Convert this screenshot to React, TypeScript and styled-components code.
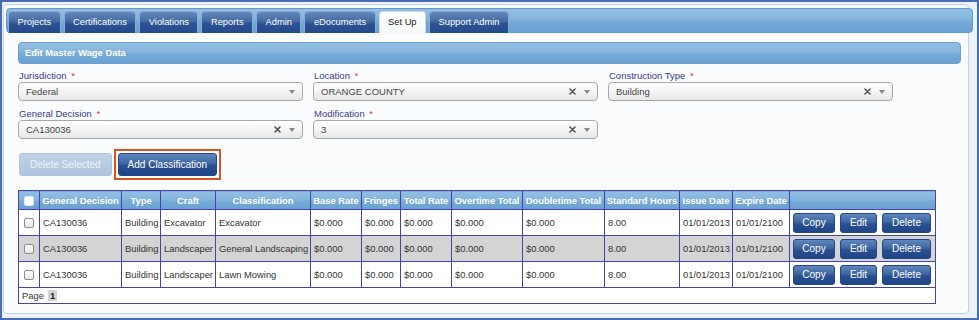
import React from 'react';
import styled, { createGlobalStyle, css } from 'styled-components';

const GlobalStyle = createGlobalStyle`
  html, body { margin: 0; padding: 0; background: #ffffff; }
  body { font-family: "Liberation Sans", Arial, sans-serif; }
  * { box-sizing: border-box; }
`;

const glossBlue = css`
  background: linear-gradient(to bottom, #92bfe3 0%, #86b5dd 42%, #74a9d7 58%, #6aa1d2 100%);
`;

const darkButton = css`
  background: linear-gradient(to bottom, #5f86bf 0%, #3f679f 45%, #2a5092 55%, #1f4587 100%);
  border: 1px solid #22478a;
  color: #ffffff;
`;

const Frame = styled.div`
  width: 979px;
  height: 320px;
  border: 2px solid #4a6cb4;
  background: #edf2f8;
  padding: 2px 8px 4px 1px;
`;

const Panel = styled.div`
  height: 100%;
  border: 1px solid #c0d2e6;
  border-radius: 4px;
  background: #fbfcfe;
  display: flex;
  flex-direction: column;
`;

const TabBar = styled.div`
  height: 26px;
  margin: 3px -5px 0 2px;
  padding: 2px 0 0 1px;
  border: 1px solid #6398cc;
  border-radius: 4px;
  ${glossBlue};
  display: flex;
  align-items: flex-end;
  gap: 3px;
`;

const Tab = styled.div<{ $active?: boolean }>`
  height: 22px;
  margin-bottom: -1px;
  padding: 0 8.5px;
  border: 1px solid #8aabd6;
  border-bottom: none;
  border-radius: 4px 4px 0 0;
  font-size: 9.3px;
  line-height: 21px;
  white-space: nowrap;
  color: #ffffff;
  background: linear-gradient(to bottom, #6389bf 0%, #44699f 45%, #2d5393 55%, #234a8b 100%);
  ${(p) =>
    p.$active &&
    css`
      color: #222222;
      background: linear-gradient(to bottom, #ffffff 0%, #f6f7f9 100%);
      border-color: #c9d8ea;
    `}
`;

const Body = styled.div`
  padding: 0 7px 9px 14px;
  display: flex;
  flex-direction: column;
`;

const SectionHeader = styled.div`
  margin-top: 9px;
  height: 22px;
  border: 1px solid #6a9fd2;
  border-radius: 4px;
  ${glossBlue};
  color: #ffffff;
  font-weight: bold;
  font-size: 9.4px;
  line-height: 20px;
  padding-left: 6px;
`;

const FormGrid = styled.div`
  margin-top: 5px;
  display: grid;
  grid-template-columns: repeat(3, 285px);
  column-gap: 10px;
  row-gap: 6px;
`;

const Field = styled.div`
  display: flex;
  flex-direction: column;
`;

const Label = styled.label`
  font-size: 9.5px;
  line-height: 13px;
  color: #38388f;
  padding-left: 1px;
`;

const Req = styled.span`
  color: #e03a3a;
  margin-left: 2px;
`;

const SelectBox = styled.div`
  height: 19px;
  border: 1px solid #a8a8a8;
  border-radius: 4px;
  background: linear-gradient(to bottom, #ffffff 0%, #f4f4f4 50%, #e8e8e8 100%);
  display: flex;
  align-items: center;
  padding: 0 7px;
  font-size: 9.5px;
  color: #444444;
`;

const SelectValue = styled.span`
  flex: 1;
`;

const SelectIcons = styled.span`
  display: flex;
  align-items: center;
  gap: 8px;
`;

const ButtonRow = styled.div`
  margin-top: 10px;
  display: flex;
  align-items: center;
`;

const DisabledButton = styled.button`
  margin-left: 1px;
  height: 23px;
  padding: 0 10px;
  border: 1px solid #b0c4dd;
  border-radius: 3px;
  background: linear-gradient(to bottom, #c0d2e7, #afc4de);
  color: #eef4fa;
  font-family: inherit;
  font-size: 10px;
`;

const Highlight = styled.span`
  margin-left: 2px;
  border: 2px solid #d6561e;
  padding: 2px;
  display: inline-flex;
`;

const PrimaryButton = styled.button`
  height: 23px;
  padding: 0 9px;
  border-radius: 3px;
  ${darkButton};
  font-family: inherit;
  font-size: 10px;
`;

const Table = styled.table`
  margin-top: 10px;
  width: 917px;
  table-layout: fixed;
  border-collapse: collapse;
  border: 1px solid #4444a4;
  font-size: 9.4px;
  color: #333333;
  background: #ffffff;
`;

const Col = styled.col<{ $w: number }>`
  width: ${(p) => p.$w}px;
`;

const Th = styled.th`
  height: 19px;
  padding: 0 1px;
  border: 1px solid #4444a4;
  ${glossBlue};
  color: #ffffff;
  font-weight: bold;
  text-align: center;
  white-space: nowrap;
  overflow: hidden;
`;

const Tr = styled.tr<{ $alt?: boolean }>`
  background: ${(p) => (p.$alt ? '#d4d4d4' : '#ffffff')};
`;

const Td = styled.td`
  height: 26px;
  padding: 0 0 0 3px;
  border: 1px solid #4444a4;
  text-align: left;
  white-space: nowrap;
  overflow: hidden;
`;

const CheckCell = styled.td`
  border: 1px solid #4444a4;
  padding: 0;
  text-align: center;
`;

const HeadCheckCell = styled.th`
  border: 1px solid #4444a4;
  padding: 0;
  ${glossBlue};
  text-align: center;
`;

const Check = styled.span<{ $head?: boolean }>`
  display: inline-block;
  vertical-align: middle;
  width: 10px;
  height: 10px;
  border-radius: 2px;
  border: 1px solid ${(p) => (p.$head ? '#dfe8f3' : '#8c8c8c')};
  background: ${(p) => (p.$head ? '#ffffff' : 'linear-gradient(to bottom, #ffffff, #e6e6e6)')};
`;

const ActionCell = styled.td`
  border: 1px solid #4444a4;
  padding: 0 0 0 3px;
`;

const Actions = styled.div`
  display: flex;
  gap: 5px;
`;

const ActionButton = styled.button<{ $w: number }>`
  width: ${(p) => p.$w}px;
  height: 20px;
  padding: 0;
  border-radius: 3px;
  ${darkButton};
  font-family: inherit;
  font-size: 10px;
`;

const FootCell = styled.td`
  height: 16px;
  padding: 0 0 0 3px;
  border: 1px solid #4444a4;
  background: #ffffff;
`;

const PageNum = styled.span`
  display: inline-block;
  margin-left: 4px;
  padding: 0 2px;
  background: #d4d4d4;
  color: #222222;
  font-weight: bold;
  line-height: 11px;
`;

const ClearIcon = () => (
  <svg width="7" height="7" viewBox="0 0 7 7">
    <path d="M1 1 L6 6 M6 1 L1 6" stroke="#555" strokeWidth="1.6" strokeLinecap="round" />
  </svg>
);

const CaretIcon = () => (
  <svg width="6" height="4" viewBox="0 0 6 4">
    <path d="M0 0 H6 L3 4 Z" fill="#888" />
  </svg>
);

type SelectProps = { label: string; value: string; clearable?: boolean };

const SelectField = ({ label, value, clearable = true }: SelectProps) => (
  <Field>
    <Label>
      {label} <Req>*</Req>
    </Label>
    <SelectBox>
      <SelectValue>{value}</SelectValue>
      <SelectIcons>
        {clearable && <ClearIcon />}
        <CaretIcon />
      </SelectIcons>
    </SelectBox>
  </Field>
);

const tabs = ['Projects', 'Certifications', 'Violations', 'Reports', 'Admin', 'eDocuments', 'Set Up', 'Support Admin'];

const columns: { label: string; w: number }[] = [
  { label: '', w: 21 },
  { label: 'General Decision', w: 82 },
  { label: 'Type', w: 39 },
  { label: 'Craft', w: 55 },
  { label: 'Classification', w: 95 },
  { label: 'Base Rate', w: 51 },
  { label: 'Fringes', w: 39 },
  { label: 'Total Rate', w: 51 },
  { label: 'Overtime Total', w: 71 },
  { label: 'Doubletime Total', w: 82 },
  { label: 'Standard Hours', w: 75 },
  { label: 'Issue Date', w: 53 },
  { label: 'Expire Date', w: 57 },
  { label: '', w: 146 },
];

const rows = [
  { craft: 'Excavator', cls: 'Excavator' },
  { craft: 'Landscaper', cls: 'General Landscaping' },
  { craft: 'Landscaper', cls: 'Lawn Mowing' },
];

export default function App() {
  return (
    <>
      <GlobalStyle />
      <Frame>
        <Panel>
          <TabBar>
            {tabs.map((t) => (
              <Tab key={t} $active={t === 'Set Up'}>
                {t}
              </Tab>
            ))}
          </TabBar>
          <Body>
            <SectionHeader>Edit Master Wage Data</SectionHeader>
            <FormGrid>
              <SelectField label="Jurisdiction" value="Federal" clearable={false} />
              <SelectField label="Location" value="ORANGE COUNTY" />
              <SelectField label="Construction Type" value="Building" />
              <SelectField label="General Decision" value="CA130036" />
              <SelectField label="Modification" value="3" />
            </FormGrid>
            <ButtonRow>
              <DisabledButton>Delete Selected</DisabledButton>
              <Highlight>
                <PrimaryButton>Add Classification</PrimaryButton>
              </Highlight>
            </ButtonRow>
            <Table>
              <colgroup>
                {columns.map((c, i) => (
                  <Col key={i} $w={c.w} />
                ))}
              </colgroup>
              <thead>
                <tr>
                  <HeadCheckCell>
                    <Check $head />
                  </HeadCheckCell>
                  {columns.slice(1).map((c, i) => (
                    <Th key={i}>{c.label}</Th>
                  ))}
                </tr>
              </thead>
              <tbody>
                {rows.map((r, i) => (
                  <Tr key={i} $alt={i === 1}>
                    <CheckCell>
                      <Check />
                    </CheckCell>
                    <Td>CA130036</Td>
                    <Td>Building</Td>
                    <Td>{r.craft}</Td>
                    <Td>{r.cls}</Td>
                    <Td>$0.000</Td>
                    <Td>$0.000</Td>
                    <Td>$0.000</Td>
                    <Td>$0.000</Td>
                    <Td>$0.000</Td>
                    <Td>8.00</Td>
                    <Td>01/01/2013</Td>
                    <Td>01/01/2100</Td>
                    <ActionCell>
                      <Actions>
                        <ActionButton $w={42}>Copy</ActionButton>
                        <ActionButton $w={37}>Edit</ActionButton>
                        <ActionButton $w={49}>Delete</ActionButton>
                      </Actions>
                    </ActionCell>
                  </Tr>
                ))}
              </tbody>
              <tfoot>
                <tr>
                  <FootCell colSpan={14}>
                    Page<PageNum>1</PageNum>
                  </FootCell>
                </tr>
              </tfoot>
            </Table>
          </Body>
        </Panel>
      </Frame>
    </>
  );
}
